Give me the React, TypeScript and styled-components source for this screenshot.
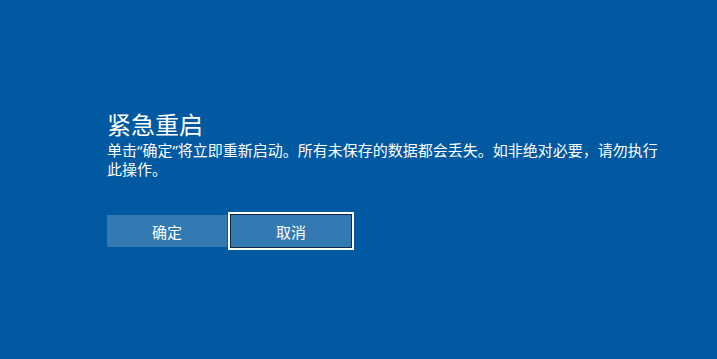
import React from 'react';
import styled, { createGlobalStyle } from 'styled-components';

const GlobalStyle = createGlobalStyle`
  html, body {
    margin: 0;
    padding: 0;
    background-color: #0059a1;
  }
  body {
    font-family: "Noto Sans", "Noto Sans CJK SC", sans-serif;
  }
`;

const App = () => {
  return (
    <Screen>
      <GlobalStyle />
      <Panel>
        <Title>紧急重启</Title>
        <Message>
          单击“确定”将立即重新启动。所有未保存的数据都会丢失。如非绝对必要，请勿执行此操作。
        </Message>
        <ButtonRow>
          <ActionButton>确定</ActionButton>
          <ActionButton focused>取消</ActionButton>
        </ButtonRow>
      </Panel>
    </Screen>
  );
};

const Screen = styled.div`
  width: 717px;
  height: 359px;
  background-color: #0059a1;
  box-sizing: border-box;
  padding: 109px 0 0 107px;
`;

const Panel = styled.div`
  width: 560px;
  display: flex;
  flex-direction: column;
`;

const Title = styled.div`
  color: #ffffff;
  font-size: 24px;
  line-height: 32px;
`;

const Message = styled.div`
  color: #ffffff;
  font-size: 15px;
  line-height: 19px;
  margin-top: 0;
`;

const ButtonRow = styled.div`
  display: flex;
  gap: 4px;
  margin-top: 36px;
`;

interface ActionButtonProps {
  focused?: boolean;
}
const ActionButton = styled.button<ActionButtonProps>`
  width: 120px;
  height: 32px;
  padding: 0;
  border: none;
  background-color: rgba(255, 255, 255, 0.2);
  color: #ffffff;
  font-family: "Noto Sans", "Noto Sans CJK SC", sans-serif;
  font-size: 15px;
  box-shadow: ${(p) =>
    p.focused ? '0 0 0 1px #0c2a47, 0 0 0 3px #ffffff' : 'none'};
`;

export default App;
